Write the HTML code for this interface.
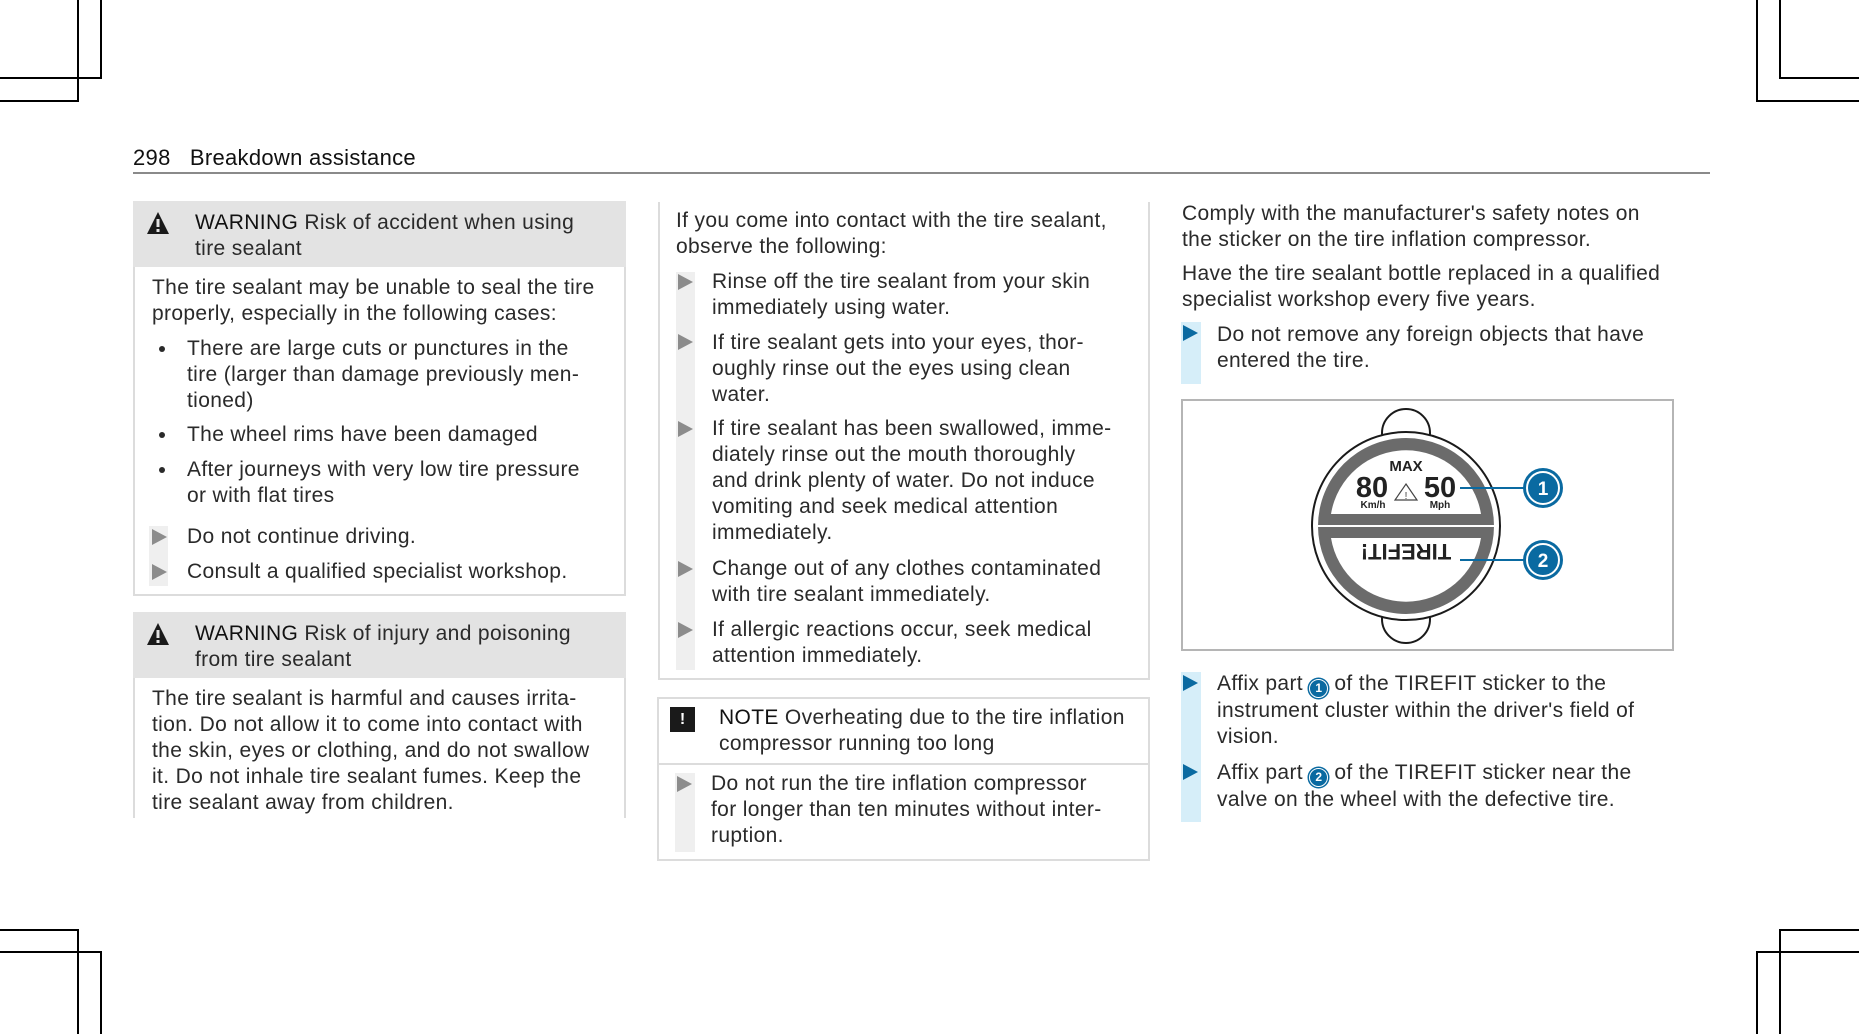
<!DOCTYPE html>
<html><head><meta charset="utf-8"><style>
html,body{margin:0;padding:0;background:#fff;}
body{width:1859px;height:1032px;position:relative;overflow:hidden;font-family:"Liberation Sans",sans-serif;color:#2a2a2a;}
.t{position:absolute;font-size:21px;line-height:26px;letter-spacing:0.35px;white-space:nowrap;}
.c{position:absolute;border:0 solid #000;box-sizing:border-box;}
.g{position:absolute;border:2px solid #dcdcdc;box-sizing:border-box;}
.hd{position:absolute;background:#e3e3e3;}
.bar{position:absolute;background:#efefef;}
.tri{position:absolute;width:0;height:0;border-top:8px solid transparent;border-bottom:8px solid transparent;border-left:15px solid #8c8c8c;}
.bbar{position:absolute;background:#d6eef9;}
.btri{position:absolute;width:0;height:0;border-top:8px solid transparent;border-bottom:8px solid transparent;border-left:15px solid #0a6aa1;}
.dot{position:absolute;width:6px;height:6px;border-radius:50%;background:#2a2a2a;}
.num{display:inline-block;width:17px;height:17px;border-radius:50%;background:#0a6aa1;border:1.5px solid #fff;box-shadow:0 0 0 1.5px #0a6aa1;color:#fff;font-size:12px;font-weight:bold;line-height:17px;text-align:center;vertical-align:-2px;letter-spacing:0;}
b{font-weight:normal;color:#111;}
</style></head><body>
<!-- corner marks -->
<div class="c" style="left:-2px;top:-2px;width:104px;height:81px;border-right-width:2px;border-bottom-width:2px"></div>
<div class="c" style="left:-2px;top:-2px;width:81px;height:104px;border-right-width:2px;border-bottom-width:2px"></div>
<div class="c" style="left:1756px;top:-2px;width:105px;height:104px;border-left-width:2px;border-bottom-width:2px"></div>
<div class="c" style="left:1779px;top:-2px;width:82px;height:81px;border-left-width:2px;border-bottom-width:2px"></div>
<div class="c" style="left:-2px;top:929px;width:81px;height:105px;border-right-width:2px;border-top-width:2px"></div>
<div class="c" style="left:-2px;top:951px;width:104px;height:83px;border-right-width:2px;border-top-width:2px"></div>
<div class="c" style="left:1779px;top:929px;width:82px;height:105px;border-left-width:2px;border-top-width:2px"></div>
<div class="c" style="left:1756px;top:951px;width:105px;height:83px;border-left-width:2px;border-top-width:2px"></div>

<!-- header -->
<div class="t" style="left:133px;top:145px;font-size:22px;color:#111;letter-spacing:0.3px">298&nbsp;&nbsp;&nbsp;Breakdown assistance</div>
<div style="position:absolute;left:133px;top:172px;width:1577px;height:2px;background:#8a8a8a"></div>

<!-- left warning 1 -->
<div class="g" style="left:133px;top:201px;width:493px;height:395px"></div>
<div class="hd" style="left:133px;top:201px;width:493px;height:66px"></div>
<svg style="position:absolute;left:146px;top:211px" width="24" height="24" viewBox="0 0 24 24"><path d="M12 1 L23 23 H1 Z" fill="#1a1a1a"/><rect x="10.5" y="8" width="3" height="8" fill="#e3e3e3"/><rect x="10.5" y="18" width="3" height="3" fill="#e3e3e3"/></svg>
<div class="t" style="left:195px;top:210px"><b>WARNING</b> Risk of accident when using<br>tire sealant</div>
<div class="t" style="left:152px;top:275px">The tire sealant may be unable to seal the tire<br>properly, especially in the following cases:</div>
<div class="dot" style="left:159px;top:346px"></div>
<div class="t" style="left:187px;top:336px">There are large cuts or punctures in the<br>tire (larger than damage previously men-<br>tioned)</div>
<div class="dot" style="left:159px;top:432px"></div>
<div class="t" style="left:187px;top:422px">The wheel rims have been damaged</div>
<div class="dot" style="left:159px;top:467px"></div>
<div class="t" style="left:187px;top:457px">After journeys with very low tire pressure<br>or with flat tires</div>
<div class="bar" style="left:149px;top:526px;width:19px;height:60px"></div>
<div class="tri" style="left:152px;top:529px"></div>
<div class="tri" style="left:152px;top:564px"></div>
<div class="t" style="left:187px;top:524px">Do not continue driving.</div>
<div class="t" style="left:187px;top:559px">Consult a qualified specialist workshop.</div>

<!-- left warning 2 -->
<div style="position:absolute;left:133px;top:612px;width:493px;height:206px;border-left:2px solid #dcdcdc;border-right:2px solid #dcdcdc;box-sizing:border-box"></div>
<div class="hd" style="left:133px;top:612px;width:493px;height:66px"></div>
<svg style="position:absolute;left:146px;top:622px" width="24" height="24" viewBox="0 0 24 24"><path d="M12 1 L23 23 H1 Z" fill="#1a1a1a"/><rect x="10.5" y="8" width="3" height="8" fill="#e3e3e3"/><rect x="10.5" y="18" width="3" height="3" fill="#e3e3e3"/></svg>
<div class="t" style="left:195px;top:621px"><b>WARNING</b> Risk of injury and poisoning<br>from tire sealant</div>
<div class="t" style="left:152px;top:686px">The tire sealant is harmful and causes irrita-<br>tion. Do not allow it to come into contact with<br>the skin, eyes or clothing, and do not swallow<br>it. Do not inhale tire sealant fumes. Keep the<br>tire sealant away from children.</div>

<!-- middle column -->
<div style="position:absolute;left:658px;top:202px;width:492px;height:478px;border:2px solid #dcdcdc;border-top:none;box-sizing:border-box"></div>
<div class="t" style="left:676px;top:208px">If you come into contact with the tire sealant,<br>observe the following:</div>
<div class="bar" style="left:676px;top:272px;width:19px;height:398px"></div>
<div class="tri" style="left:678px;top:274px"></div>
<div class="t" style="left:712px;top:269px">Rinse off the tire sealant from your skin<br>immediately using water.</div>
<div class="tri" style="left:678px;top:334px"></div>
<div class="t" style="left:712px;top:330px">If tire sealant gets into your eyes, thor-<br>oughly rinse out the eyes using clean<br>water.</div>
<div class="tri" style="left:678px;top:421px"></div>
<div class="t" style="left:712px;top:416px">If tire sealant has been swallowed, imme-<br>diately rinse out the mouth thoroughly<br>and drink plenty of water. Do not induce<br>vomiting and seek medical attention<br>immediately.</div>
<div class="tri" style="left:678px;top:561px"></div>
<div class="t" style="left:712px;top:556px">Change out of any clothes contaminated<br>with tire sealant immediately.</div>
<div class="tri" style="left:678px;top:622px"></div>
<div class="t" style="left:712px;top:617px">If allergic reactions occur, seek medical<br>attention immediately.</div>

<!-- note -->
<div class="g" style="left:657px;top:697px;width:493px;height:164px"></div>
<div style="position:absolute;left:659px;top:763px;width:489px;height:2px;background:#dcdcdc"></div>
<div style="position:absolute;left:670px;top:707px;width:25px;height:25px;background:#1a1a1a;color:#fff;font-weight:bold;font-size:16px;line-height:25px;text-align:center">!</div>
<div class="t" style="left:719px;top:705px"><b>NOTE</b> Overheating due to the tire inflation<br>compressor running too long</div>
<div class="bar" style="left:675px;top:773px;width:20px;height:79px"></div>
<div class="tri" style="left:677px;top:776px"></div>
<div class="t" style="left:711px;top:771px">Do not run the tire inflation compressor<br>for longer than ten minutes without inter-<br>ruption.</div>

<!-- right column -->
<div class="t" style="left:1182px;top:201px">Comply with the manufacturer's safety notes on<br>the sticker on the tire inflation compressor.</div>
<div class="t" style="left:1182px;top:261px">Have the tire sealant bottle replaced in a qualified<br>specialist workshop every five years.</div>
<div class="bbar" style="left:1181px;top:322px;width:20px;height:62px"></div>
<div class="btri" style="left:1183px;top:325px"></div>
<div class="t" style="left:1217px;top:322px">Do not remove any foreign objects that have<br>entered the tire.</div>

<div class="g" style="left:1181px;top:399px;width:493px;height:252px;border-color:#b5b5b5"></div>
<svg style="position:absolute;left:1290px;top:400px" width="290" height="250" viewBox="1290 400 290 250">
  <circle cx="1406" cy="433" r="24" fill="#fff" stroke="#1a1a1a" stroke-width="2"/>
  <circle cx="1406" cy="619" r="24" fill="#fff" stroke="#1a1a1a" stroke-width="2"/>
  <circle cx="1406" cy="526" r="94" fill="#fff" stroke="#1a1a1a" stroke-width="2"/>
  <circle cx="1406" cy="526" r="88" fill="#6b6b6b"/>
  <path d="M1331 514 A76 76 0 0 1 1481 514 Z" fill="#fff"/>
  <path d="M1331 538 A76 76 0 0 0 1481 538 Z" fill="#fff"/>
  <rect x="1318" y="525" width="176" height="2" fill="#fff"/>
  <g font-family="Liberation Sans,sans-serif" font-weight="bold" fill="#222" text-anchor="middle">
    <text x="1406" y="471" font-size="15">MAX</text>
    <text x="1372" y="497" font-size="29">80</text>
    <text x="1440" y="497" font-size="29">50</text>
    <text x="1373" y="508" font-size="10">Km/h</text>
    <text x="1440" y="508" font-size="10">Mph</text>
    <text x="1406" y="558" font-size="22" transform="rotate(180 1406 551)">TIREFIT!</text>
  </g>
  <path d="M1406 484 L1417 500 H1395 Z" fill="none" stroke="#444" stroke-width="1.2"/>
  <text x="1406" y="499" font-size="10" text-anchor="middle" font-family="Liberation Sans,sans-serif" fill="#444">!</text>
  <line x1="1460" y1="488" x2="1525" y2="488" stroke="#0a6aa1" stroke-width="2"/>
  <line x1="1460" y1="560" x2="1525" y2="560" stroke="#0a6aa1" stroke-width="2"/>
  <circle cx="1543" cy="488" r="20" fill="#0a6aa1"/><circle cx="1543" cy="488" r="16" fill="none" stroke="#fff" stroke-width="2"/>
  <circle cx="1543" cy="560" r="20" fill="#0a6aa1"/><circle cx="1543" cy="560" r="16" fill="none" stroke="#fff" stroke-width="2"/>
  <text x="1543" y="495" font-size="19" font-weight="bold" fill="#fff" text-anchor="middle" font-family="Liberation Sans,sans-serif">1</text>
  <text x="1543" y="567" font-size="19" font-weight="bold" fill="#fff" text-anchor="middle" font-family="Liberation Sans,sans-serif">2</text>
</svg>

<div class="bbar" style="left:1181px;top:672px;width:20px;height:150px"></div>
<div class="btri" style="left:1183px;top:675px"></div>
<div class="t" style="left:1217px;top:671px">Affix part <span class="num">1</span> of the TIREFIT sticker to the<br>instrument cluster within the driver's field of<br>vision.</div>
<div class="btri" style="left:1183px;top:764px"></div>
<div class="t" style="left:1217px;top:760px">Affix part <span class="num">2</span> of the TIREFIT sticker near the<br>valve on the wheel with the defective tire.</div>
</body></html>
